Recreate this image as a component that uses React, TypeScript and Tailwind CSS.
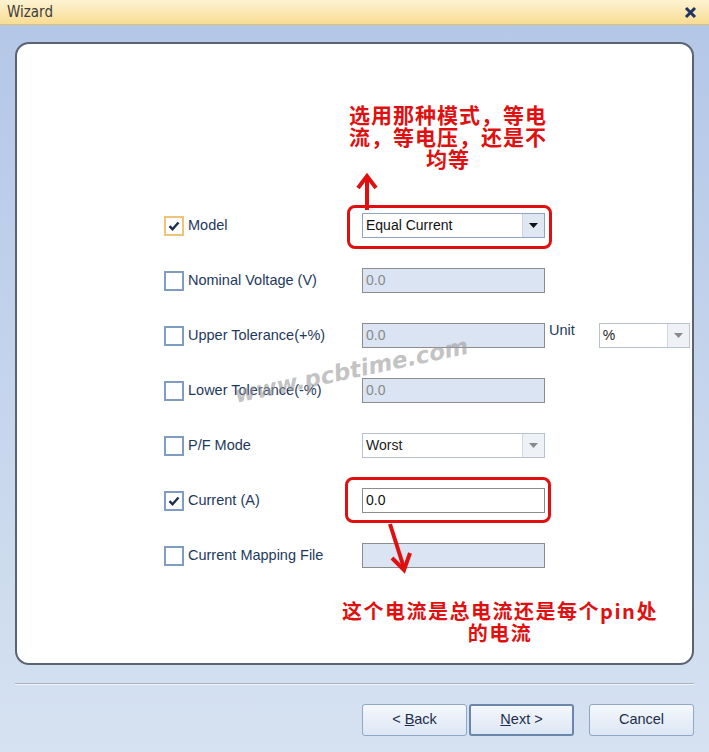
import React from "react";

const labelFont = { fontFamily: '"Liberation Sans", Arial, sans-serif' };

function Check({ checked, focus }: { checked?: boolean; focus?: boolean }) {
  return (
    <div
      className={`w-[20px] h-[20px] border-2 flex items-center justify-center ${
        focus ? "border-[#f0c27a] bg-white" : "border-[#7f9cc4] bg-white"
      }`}
    >
      {checked && (
        <svg width="12" height="12" viewBox="0 0 12 12">
          <path d="M1.5 6.2 L4.5 9.2 L10.5 2.5" stroke="#1e2f55" strokeWidth="2.4" fill="none" />
        </svg>
      )}
    </div>
  );
}

function Field({ value, enabled }: { value?: string; enabled?: boolean }) {
  return (
    <div
      className={`w-[183px] h-[25px] border border-[#8c8c8c] flex items-center px-[3px] text-[14px] ${
        enabled ? "bg-white text-[#111]" : "bg-[#dbe4f2] text-[#8a8a8a]"
      }`}
      style={labelFont}
    >
      {value}
    </div>
  );
}

function Combo({ value, enabled, w = 183 }: { value: string; enabled?: boolean; w?: number }) {
  return (
    <div
      className={`h-[25px] border flex items-stretch text-[14px] ${
        enabled ? "border-[#8fa3c2] bg-white text-[#111]" : "border-[#b9c2cf] bg-[#f3f5f9] text-[#222]"
      }`}
      style={{ ...labelFont, width: w }}
    >
      <div className={`flex-1 flex items-center px-[3px] ${enabled ? "" : "bg-white"}`}>{value}</div>
      <div
        className={`w-[22px] flex items-center justify-center border-l ${
          enabled ? "border-[#c9d3e2] bg-[#dfe7f3]" : "border-[#d3d8e0] bg-[#eef1f6]"
        }`}
      >
        <svg width="9" height="5" viewBox="0 0 9 5">
          <path d="M0 0 H9 L4.5 5 Z" fill={enabled ? "#111" : "#8a8a8a"} />
        </svg>
      </div>
    </div>
  );
}

function Row({ label, check, focus, children }: { label: string; check?: boolean; focus?: boolean; children: React.ReactNode }) {
  return (
    <div className="h-[55px] flex items-center">
      <div className="w-[198px] flex items-center gap-[4px]">
        <Check checked={check} focus={focus} />
        <span className="text-[14.5px] text-[#1e395b]" style={labelFont}>
          {label}
        </span>
      </div>
      {children}
    </div>
  );
}

export default function App() {
  return (
    <div className="w-[709px] h-[752px] flex flex-col overflow-hidden bg-gradient-to-b from-[#b3c6e7] to-[#d6e2f1]">
      <div className="h-[25px] shrink-0 flex items-center justify-between px-[7px] bg-gradient-to-b from-[#fdf3d2] to-[#f8dc92] border-b border-[#e3c06f]">
        <span className="text-[15px] text-[#3d3d3d]" style={{ fontFamily: '"DejaVu Sans Condensed", "Liberation Sans", sans-serif' }}>
          Wizard
        </span>
        <svg width="13" height="13" viewBox="0 0 13 13" className="mr-[5px]">
          <path d="M2 2 L11 11 M11 2 L2 11" stroke="#1d3463" strokeWidth="3" />
        </svg>
      </div>

      <div className="relative mt-[17px] mx-[15px] h-[623px] shrink-0 bg-white border-2 border-[#5b6370] rounded-[14px] pl-[147px] pt-[154px]">
        <Row label="Model" check focus>
          <Combo value="Equal Current" enabled />
        </Row>
        <Row label="Nominal Voltage (V)">
          <Field value="0.0" />
        </Row>
        <Row label="Upper Tolerance(+%)">
          <Field value="0.0" />
          <span className="ml-[4px] self-start mt-[12px] text-[14.5px] text-[#1e395b]" style={labelFont}>
            Unit
          </span>
          <div className="ml-[24px]">
            <Combo value="%" w={91} />
          </div>
        </Row>
        <Row label="Lower Tolerance(-%)">
          <Field value="0.0" />
        </Row>
        <Row label="P/F Mode">
          <Combo value="Worst" />
        </Row>
        <Row label="Current (A)" check>
          <Field value="0.0" enabled />
        </Row>
        <Row label="Current Mapping File">
          <Field />
        </Row>

        {/* watermark */}
        <div
          className="absolute left-[218px] top-[334px] text-[23px] font-bold italic text-[#9a9a9a]/60 -rotate-[12deg] origin-left pointer-events-none"
          style={{ fontFamily: '"DejaVu Sans", sans-serif' }}
        >
          www.pcbtime.com
        </div>

        {/* top annotation */}
        <div
          className="absolute left-[321px] top-[59px] w-[220px] text-center text-[21px] leading-[22px] font-bold text-[#e01010] tracking-[1px]"
          style={{ fontFamily: '"Noto Sans CJK SC", sans-serif' }}
        >
          选用那种模式，等电
          <br />
          流，等电压，还是不
          <br />
          均等
        </div>
        <svg className="absolute left-[335px] top-[128px]" width="30" height="40" viewBox="0 0 30 40">
          <path d="M15 38 L15 6" stroke="#e01010" strokeWidth="4" fill="none" />
          <path d="M6 16 L15 4 L24 16" stroke="#e01010" strokeWidth="4" fill="none" strokeLinejoin="miter" />
        </svg>
        <div className="absolute left-[330px] top-[161px] w-[205px] h-[44px] border-[3px] border-[#e01010] rounded-[8px]" />

        {/* bottom annotation */}
        <div className="absolute left-[328px] top-[433px] w-[206px] h-[46px] border-[3px] border-[#e01010] rounded-[8px]" />
        <svg className="absolute left-[366px] top-[478px]" width="30" height="52" viewBox="0 0 30 52">
          <path d="M7 2 L21 46" stroke="#e01010" strokeWidth="4" fill="none" />
          <path d="M9 36 L21 48 L27 31" stroke="#e01010" strokeWidth="4" fill="none" />
        </svg>
        <div
          className="absolute left-[300px] top-[556px] w-[366px] text-center text-[20px] leading-[22px] font-bold text-[#e01010] tracking-[1.5px]"
          style={{ fontFamily: '"Noto Sans CJK SC", sans-serif' }}
        >
          这个电流是总电流还是每个pin处
          <br />
          的电流
        </div>
      </div>

      <div className="mt-[18px] mx-[15px] h-[2px] border-t border-[#a9b3c0] bg-white/70 shrink-0" />

      <div className="mt-[19px] mx-[15px] flex justify-end shrink-0" style={labelFont}>
        <button className="w-[105px] h-[32px] rounded-[3px] border border-[#8ea6c8] bg-gradient-to-b from-[#f5f8fd] to-[#dce6f4] text-[14.5px] text-[#1e2e4a]">
          &lt; <u>B</u>ack
        </button>
        <button className="ml-[2px] w-[105px] h-[32px] rounded-[3px] border-2 border-[#6a86ad] bg-gradient-to-b from-[#f5f8fd] to-[#dce6f4] text-[14.5px] text-[#1e2e4a]">
          <u>N</u>ext &gt;
        </button>
        <button className="ml-[15px] w-[105px] h-[32px] rounded-[3px] border border-[#8ea6c8] bg-gradient-to-b from-[#f5f8fd] to-[#dce6f4] text-[14.5px] text-[#1e2e4a]">
          Cancel
        </button>
      </div>
    </div>
  );
}
